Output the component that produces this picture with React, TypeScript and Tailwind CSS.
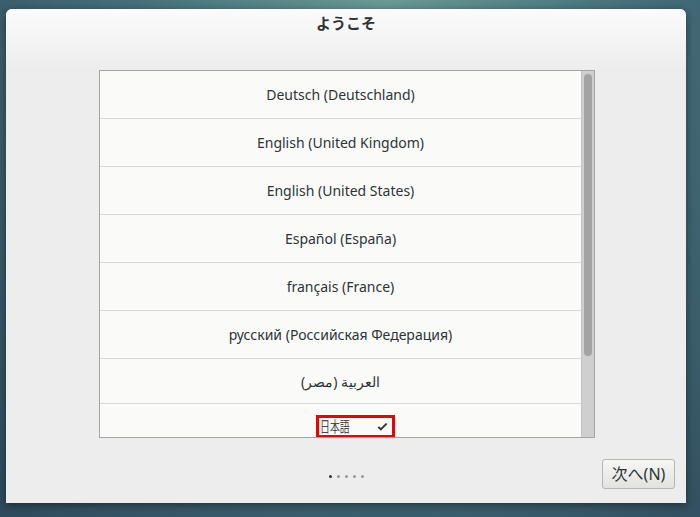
import React from 'react';

const font = '"Noto Sans", "Noto Sans CJK JP", sans-serif';

const languages = [
  { label: 'Deutsch (Deutschland)', h: 'h-[48px]' },
  { label: 'English (United Kingdom)', h: 'h-[48px]' },
  { label: 'English (United States)', h: 'h-[48px]' },
  { label: 'Español (España)', h: 'h-[48px]' },
  { label: 'français (France)', h: 'h-[48px]' },
  { label: 'русский (Российская Федерация)', h: 'h-[48px]' },
  { label: 'العربية (مصر)', h: 'h-[45px]' },
];

function Check() {
  return (
    <svg width="11" height="10" viewBox="0 0 12 10" className="text-[#2e3436] shrink-0">
      <path d="M0.6 5.6 L4.2 9.2 L11.4 1.8 L9.8 0.5 L4.2 6.2 L2.2 4.1 Z" fill="currentColor" />
    </svg>
  );
}

export default function App() {
  return (
    <div
      className="w-[700px] h-[517px] overflow-hidden pt-[9px] pl-[6px] bg-[radial-gradient(ellipse_at_55%_0%,#6a9a96_0%,#46707c_45%,#2f4a5c_100%)]"
      style={{ fontFamily: font }}
    >
      <div className="w-[680px] h-[494px] flex flex-col rounded-t-[6px] bg-[#ededed] shadow-[0_2px_8px_rgba(0,0,0,0.45)] overflow-hidden">
        {/* header */}
        <div className="h-[61px] bg-gradient-to-b from-[#fbfbfb] to-[#ededed] flex justify-center pt-[3px]">
          <div className="text-[15px] font-semibold text-[#2e3436] leading-[22px]">ようこそ</div>
        </div>

        {/* language list */}
        <div className="ml-[93px] w-[496px] h-[368px] border border-[#a4a4a4] bg-[#fafaf9] flex">
          <div className="flex-1 flex flex-col overflow-hidden">
            {languages.map((l) => (
              <div
                key={l.label}
                className={`${l.h} shrink-0 border-b border-[#d8d8d6] flex items-center justify-center text-[14px] text-[#2e3436]`}
              >
                {l.label}
              </div>
            ))}
            <div className="flex-1 flex justify-center pt-[11px]">
              <div className="ml-[30px] w-[79px] h-[23px] shrink-0 border-[3px] border-[#f00000] flex items-center pl-[1px] text-[15px] text-[#4a4a4a] whitespace-nowrap">
                <span className="w-[29px] shrink-0 overflow-visible">
                  <span className="inline-block origin-left scale-x-[0.66] leading-none">日本語</span>
                </span>
                <span className="ml-[28px] flex">
                  <Check />
                </span>
              </div>
            </div>
          </div>
          {/* scrollbar */}
          <div className="w-[13px] bg-[#cfcfcf] border-l border-[#c4c4c4] flex justify-center pt-[3px]">
            <div className="w-[8px] h-[282px] rounded-full bg-[#a3a3a3]" />
          </div>
        </div>

        {/* footer */}
        <div className="flex-1 grid grid-cols-[1fr_auto_1fr]">
          <div />
          <div className="flex items-start gap-[5px] pt-[37px]">
            <div className="w-[3px] h-[3px] rounded-full bg-[#2e3436]" />
            <div className="w-[3px] h-[3px] rounded-full bg-[#9a9a9a]" />
            <div className="w-[3px] h-[3px] rounded-full bg-[#9a9a9a]" />
            <div className="w-[3px] h-[3px] rounded-full bg-[#9a9a9a]" />
            <div className="w-[3px] h-[3px] rounded-full bg-[#9a9a9a]" />
          </div>
          <div className="flex justify-end items-start pt-[21px] pr-[11px]">
            <button className="w-[73px] h-[30px] rounded-[3px] border border-[#b6b6b3] bg-gradient-to-b from-[#f6f6f5] to-[#e2e2e0] text-[16px] text-[#2e3436] flex items-center justify-center whitespace-nowrap">
              次へ(N)
            </button>
          </div>
        </div>
      </div>
    </div>
  );
}
